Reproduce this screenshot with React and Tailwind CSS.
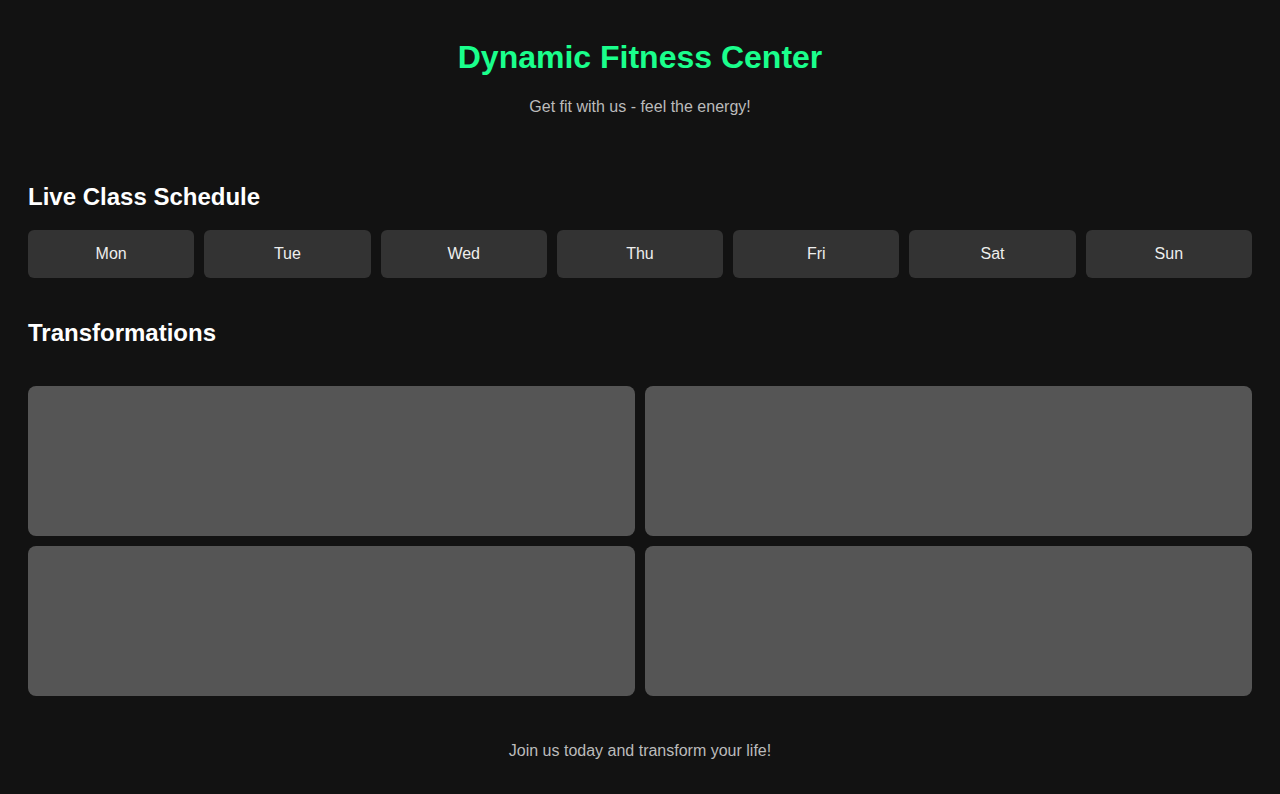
import React from "react";

export default function App() {
  const days = ["Mon", "Tue", "Wed", "Thu", "Fri", "Sat", "Sun"];
  return (
    <div className="min-h-[794px] bg-[#121212] text-white" style={{ fontFamily: '"Liberation Sans", Arial, sans-serif' }}>
      <header className="pt-[39px] text-center">
        <h1 className="text-[32px] font-bold leading-[37px] text-[#1aff8c]">Dynamic Fitness Center</h1>
        <p className="mt-[22px] text-[16px] leading-[18px] text-[#bbbbbb]">Get fit with us - feel the energy!</p>
      </header>
      <main className="px-[28px]">
        <h2 className="mt-[67px] text-[24px] font-bold leading-[28px]">Live Class Schedule</h2>
        <div className="mt-[19px] flex gap-[10px]">
          {days.map((d) => (
            <button key={d} className="flex h-[48px] flex-1 items-center justify-center rounded-[6px] bg-[#333333] text-[16px] text-[#eeeeee]">
              {d}
            </button>
          ))}
        </div>
        <h2 className="mt-[41px] text-[24px] font-bold leading-[28px]">Transformations</h2>
        <div className="mt-[39px] grid grid-cols-2 gap-[10px]">
          {[0, 1, 2, 3].map((i) => (
            <div key={i} className="h-[150px] rounded-[8px] bg-[#555555]" />
          ))}
        </div>
      </main>
      <footer className="pt-[46px] pb-[30px] text-center">
        <p className="text-[16px] leading-[18px] text-[#bbbbbb]">Join us today and transform your life!</p>
      </footer>
    </div>
  );
}
